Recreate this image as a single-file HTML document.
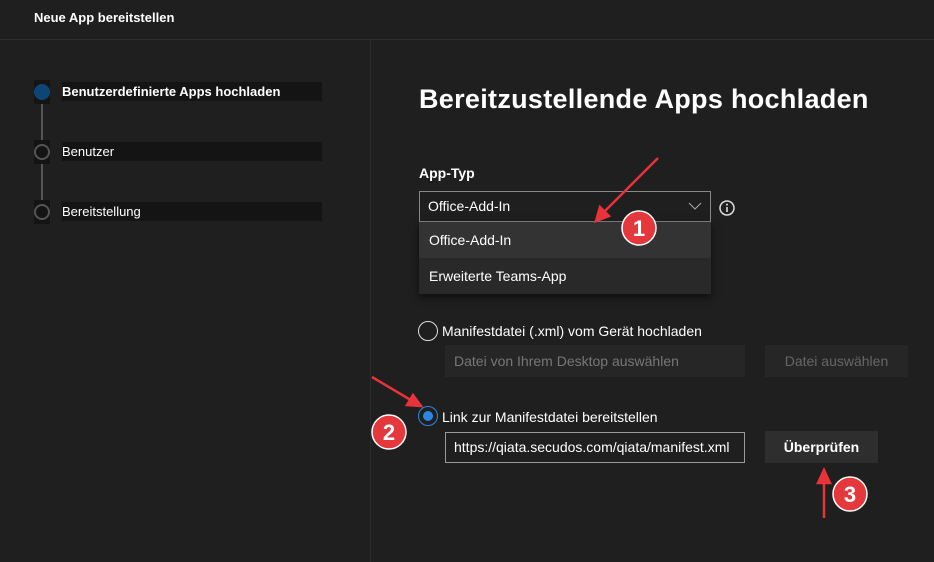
<!DOCTYPE html>
<html><head><meta charset="utf-8"><style>
*{margin:0;padding:0;box-sizing:border-box}
body{width:934px;height:562px;background:#1f1f1f;font-family:"Liberation Sans",sans-serif;color:#fff;position:relative;overflow:hidden;font-size:13px}
.a{position:absolute}
</style></head><body>
<div class="a" style="left:34px;top:10px;font-size:13px;font-weight:bold">Neue App bereitstellen</div>
<div class="a" style="left:0;top:39px;width:934px;height:1px;background:#2e2e2e"></div>
<div class="a" style="left:370px;top:40px;width:1px;height:522px;background:#2a2a2a"></div>

<div class="a" style="left:34px;top:80px;width:16px;height:24px;background:#141414"></div>
<div class="a" style="left:34px;top:140px;width:16px;height:24px;background:#141414"></div>
<div class="a" style="left:34px;top:200px;width:16px;height:24px;background:#141414"></div>
<div class="a" style="left:41px;top:104px;width:2px;height:36px;background:#555"></div>
<div class="a" style="left:41px;top:164px;width:2px;height:36px;background:#555"></div>
<div class="a" style="left:34px;top:84px;width:16px;height:16px;border-radius:50%;background:#0e4577"></div>
<div class="a" style="left:34px;top:144px;width:16px;height:16px;border-radius:50%;border:2px solid #555"></div>
<div class="a" style="left:34px;top:204px;width:16px;height:16px;border-radius:50%;border:2px solid #555"></div>
<div class="a" style="left:62px;top:82px;width:260px;height:19px;background:#141414;font-weight:bold;line-height:19px">Benutzerdefinierte Apps hochladen</div>
<div class="a" style="left:62px;top:142px;width:260px;height:19px;background:#141414;line-height:19px">Benutzer</div>
<div class="a" style="left:62px;top:202px;width:260px;height:19px;background:#141414;line-height:19px">Bereitstellung</div>

<div class="a" style="left:419px;top:84px;font-size:27px;font-weight:bold;letter-spacing:0.3px">Bereitzustellende Apps hochladen</div>
<div class="a" style="left:419px;top:165px;font-weight:bold;font-size:14px">App-Typ</div>
<div class="a" style="left:419px;top:191px;width:292px;height:31px;border:1px solid #888;line-height:29px;padding-left:8px;font-size:14px">Office-Add-In
<svg class="a" style="right:8px;top:10px" width="14" height="9"><path d="M1 1L7 7L13 1" stroke="#aaa" fill="none"/></svg></div>
<svg class="a" style="left:718px;top:199px" width="18" height="18"><circle cx="9" cy="9" r="7" stroke="#ddd" stroke-width="1.5" fill="none"/><rect x="8.2" y="8" width="1.6" height="5" fill="#ddd"/><circle cx="9" cy="5.6" r="1" fill="#ddd"/></svg>
<div class="a" style="left:419px;top:222px;width:292px;height:72px;background:#292929;box-shadow:0 3px 8px rgba(0,0,0,.6)">
<div style="height:36px;background:#333;line-height:36px;padding-left:10px;font-size:14px">Office-Add-In</div>
<div style="height:36px;line-height:36px;padding-left:10px;font-size:14px">Erweiterte Teams-App</div></div>

<div class="a" style="left:418px;top:321px;width:20px;height:20px;border-radius:50%;border:1.5px solid #ddd"></div>
<div class="a" style="left:442px;top:323px;font-size:14px">Manifestdatei (.xml) vom Gerät hochladen</div>
<div class="a" style="left:445px;top:345px;width:300px;height:32px;background:#262626;color:#777;line-height:32px;padding-left:9px;font-size:14px">Datei von Ihrem Desktop auswählen</div>
<div class="a" style="left:765px;top:345px;width:143px;height:32px;background:#262626;color:#666;line-height:32px;text-align:center;font-size:14px">Datei auswählen</div>

<div class="a" style="left:418px;top:406px;width:20px;height:20px;border-radius:50%;border:1.5px solid #2b87e0"></div>
<div class="a" style="left:423px;top:411px;width:10px;height:10px;border-radius:50%;background:#2b87e0"></div>
<div class="a" style="left:442px;top:409px;font-size:14px">Link zur Manifestdatei bereitstellen</div>
<div class="a" style="left:445px;top:432px;width:300px;height:31px;border:1px solid #999;line-height:29px;padding-left:8px;font-size:14px">https://qiata.secudos.com/qiata/manifest.xml</div>
<div class="a" style="left:765px;top:431px;width:113px;height:32px;background:#2e2e2e;line-height:32px;text-align:center;font-weight:bold;font-size:14px">Überprüfen</div>

<svg class="a" style="left:0;top:0" width="934" height="562">
<g stroke="#e8333a" stroke-width="2.5" fill="#e8333a">
<line x1="658" y1="158" x2="602" y2="214"/><path d="M596 221L600 207L609 216Z"/>
<line x1="372" y1="377" x2="414" y2="402"/><path d="M421 406L407 405L413 395Z"/>
<line x1="824" y1="518" x2="824" y2="478"/><path d="M824 470L830 483L818 483Z"/>
</g>
<g fill="#e5383d" stroke="#fff" stroke-width="1.5"><circle cx="639" cy="228" r="17"/><circle cx="389" cy="432" r="17"/><circle cx="850" cy="494" r="17"/></g>
<g fill="#fff" font-family="Liberation Sans" font-weight="bold" font-size="22" text-anchor="middle"><text x="639" y="236">1</text><text x="389" y="440">2</text><text x="850" y="502">3</text></g>
</svg>
</body></html>
